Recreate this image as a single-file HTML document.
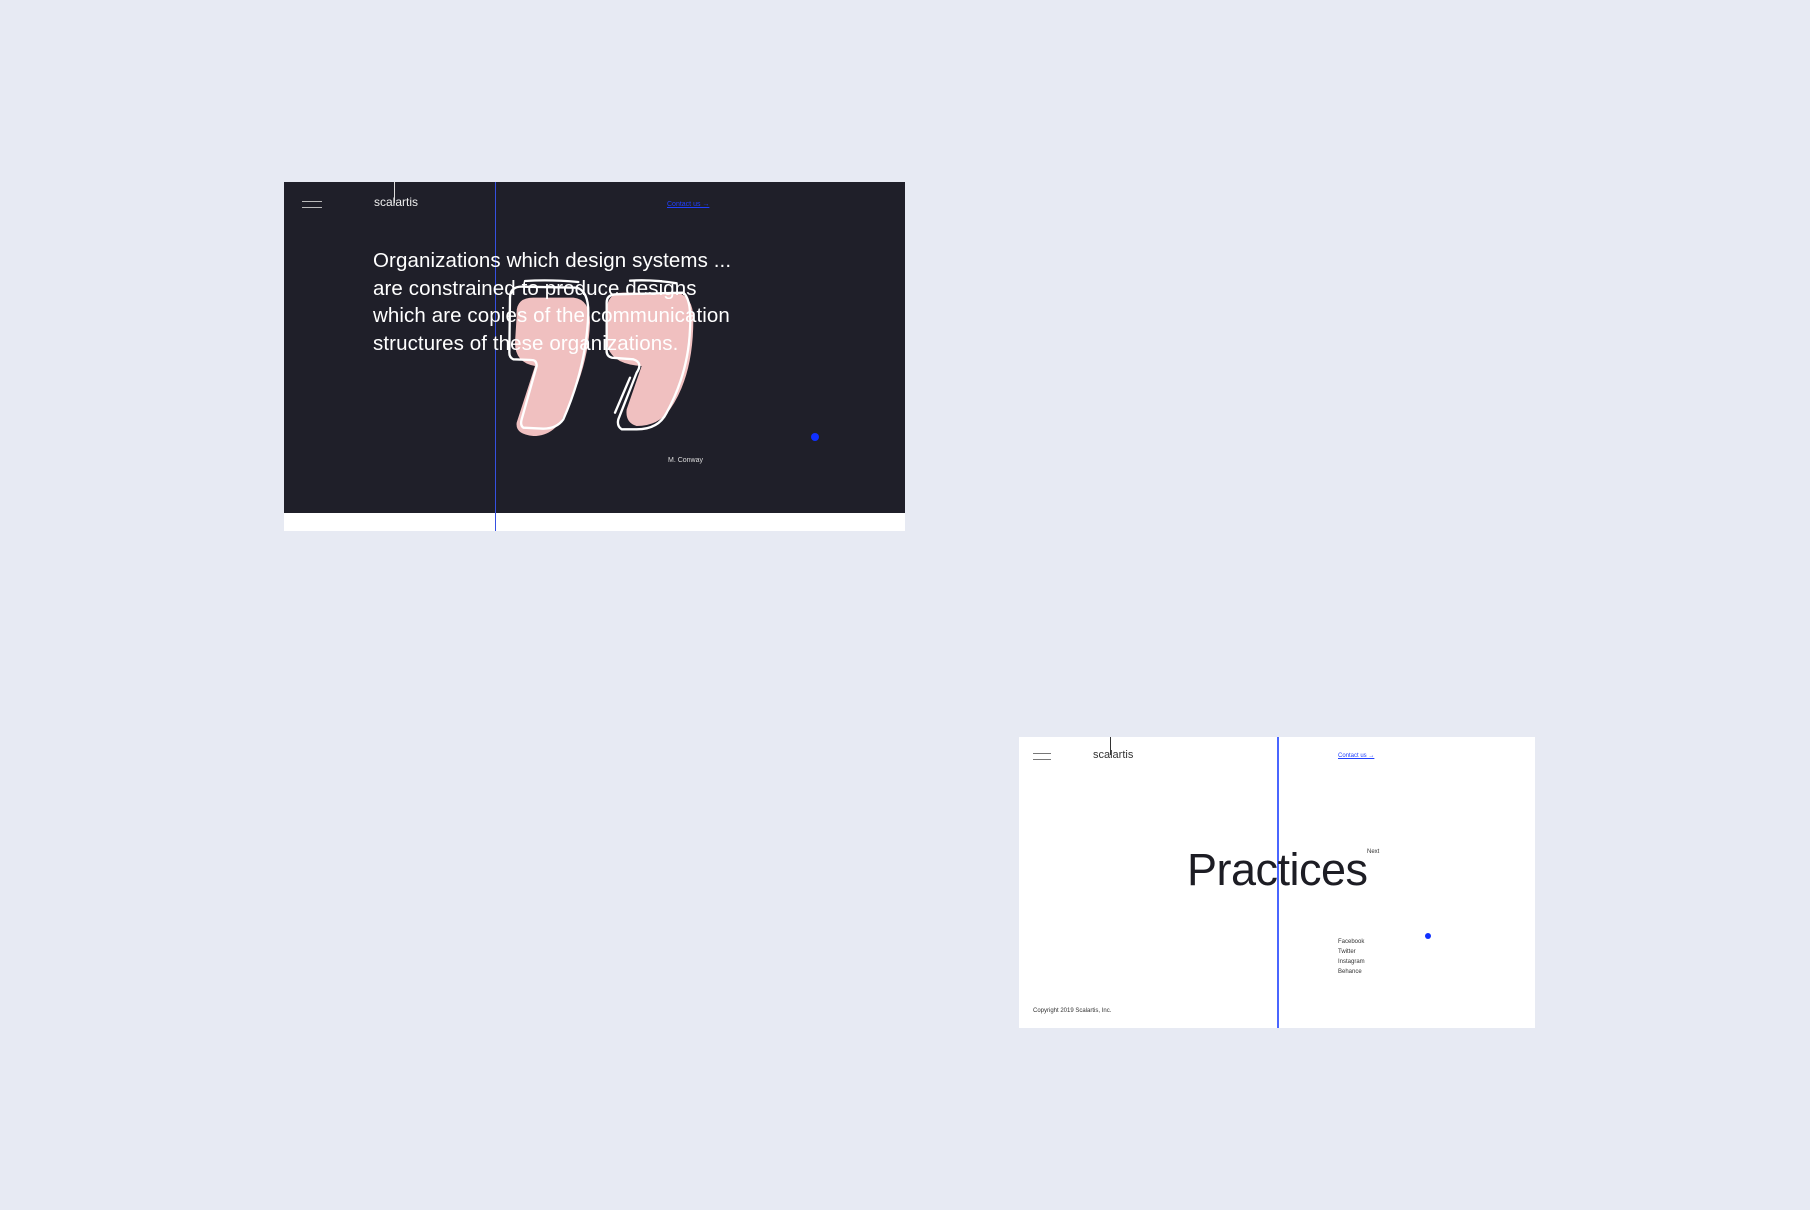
<!DOCTYPE html>
<html><head><meta charset="utf-8"><style>
*{margin:0;padding:0;box-sizing:border-box}
body{width:1810px;height:1210px;background:#e7eaf3;position:relative;overflow:hidden;font-family:"Liberation Sans",sans-serif}
.a{position:absolute}
.ham{width:20px;height:7px;border-top:1.5px solid #aaa;border-bottom:1.5px solid #aaa}
</style></head><body>
<!-- panel 1 -->
<div class="a" style="left:284px;top:182px;width:621px;height:349px;background:#fff"></div>
<div class="a" style="left:284px;top:182px;width:621px;height:331px;background:#1f1f29"></div>
<div class="a ham" style="left:302px;top:201px;border-color:#bbb"></div>
<div class="a" style="left:374px;top:195px;font-size:12px;color:#eee">scalartis</div>
<div class="a" style="left:394px;top:182px;width:1px;height:21px;background:#ddd"></div>
<div class="a" style="left:667px;top:201px;font-size:7px;color:#2040ff;text-decoration:underline">Contact us →</div>
<svg class="a" style="left:490px;top:266px" width="220" height="180" viewBox="0 0 660 540">
<g fill="#f0c0c0">
<path d="M80,150 Q75,95 130,95 L250,95 Q300,100 300,170 Q295,300 230,430 Q200,510 130,510 Q75,505 80,470 L135,300 Q75,290 75,230 Z"/>
<path d="M350,150 Q345,80 400,80 L560,80 Q610,90 610,160 Q610,330 540,430 Q505,480 440,480 Q405,470 410,430 L455,300 Q360,295 350,230 Z"/>
</g>
<g fill="none" stroke="#fff" stroke-width="7" stroke-linecap="round" stroke-linejoin="round">
<path d="M60,95 Q60,60 100,62 L260,65 Q295,75 295,140 Q290,300 220,460 Q200,488 160,488 L100,485 Q90,478 95,460 L140,300 Q140,282 125,282 L70,280 Q58,275 58,260 Z"/>
<path d="M350,110 Q350,85 380,85 L580,80 Q605,100 600,190 Q595,320 530,440 Q505,490 440,490 L395,490 Q380,480 385,460 L440,320 Q460,290 430,280 L365,275 Q348,270 350,250 Z"/>
<path d="M420,335 L375,440"/>
<path d="M105,45 Q180,40 265,48"/>
<path d="M420,44 Q490,40 560,52"/>
</g>
</svg>
<div class="a" style="left:495px;top:182px;width:1px;height:349px;background:#3550e0"></div>
<div class="a" style="left:373px;top:247px;font-size:20.5px;line-height:27.7px;color:#fff;white-space:nowrap;letter-spacing:0.1px">Organizations which design systems ...<br>are constrained to produce designs<br>which are copies of the communication<br>structures of these organizations.</div>
<div class="a" style="left:811px;top:433px;width:8px;height:8px;border-radius:50%;background:#1030ff"></div>
<div class="a" style="left:668px;top:457px;font-size:7px;color:#ddd">M. Conway</div>
<!-- panel 2 -->
<div class="a" style="left:1019px;top:737px;width:516px;height:291px;background:#fff"></div>
<div class="a ham" style="left:1033px;top:753px;width:18px;border-color:#777"></div>
<div class="a" style="left:1093px;top:749px;font-size:11px;color:#333">scalartis</div>
<div class="a" style="left:1110px;top:737px;width:1px;height:18px;background:#333"></div>
<div class="a" style="left:1277px;top:737px;width:1.5px;height:291px;background:#4a66ff"></div>
<div class="a" style="left:1338px;top:753px;font-size:6px;color:#2040ff;text-decoration:underline">Contact us →</div>
<div class="a" style="left:1187px;top:845px;font-size:45px;line-height:50px;color:#1d1d24;letter-spacing:-0.5px">Practices</div>
<div class="a" style="left:1367px;top:849px;font-size:6px;color:#333">Next</div>
<div class="a" style="left:1425px;top:933px;width:6px;height:6px;border-radius:50%;background:#1030ff"></div>
<div class="a" style="left:1338px;top:937px;font-size:6px;line-height:10px;color:#333">Facebook<br>Twitter<br>Instagram<br>Behance</div>
<div class="a" style="left:1033px;top:1008px;font-size:6px;color:#333">Copyright 2019 Scalartis, Inc.</div>
</body></html>
